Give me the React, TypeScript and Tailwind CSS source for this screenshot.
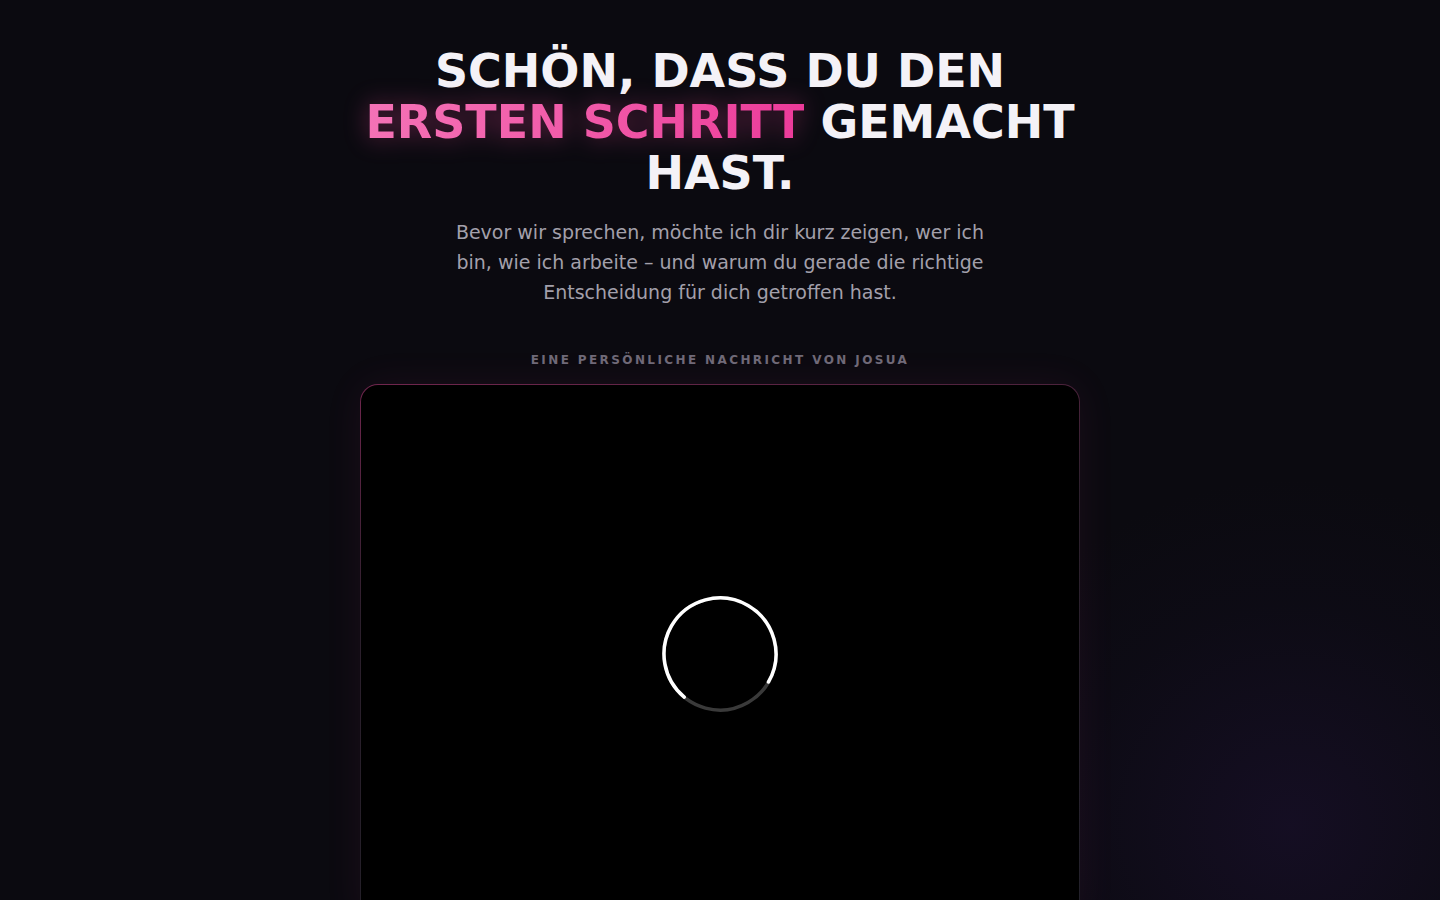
export default function App() {
  return (
    <div className="relative min-h-screen overflow-hidden bg-[#0b0a10] font-['DejaVu_Sans',sans-serif]">
      <div className="pointer-events-none absolute -right-[200px] bottom-[-250px] h-[700px] w-[700px] rounded-full bg-[radial-gradient(circle,rgba(60,30,110,0.2)_0%,rgba(30,20,60,0.1)_45%,transparent_70%)]" />
      <main className="relative mx-auto flex w-[720px] flex-col items-center pt-[46px]">
        <h1 className="text-center text-[46px] font-bold leading-[51px] text-[#f4f2f7]">
          SCHÖN, DASS DU DEN
          <br />
          <span className="bg-gradient-to-r from-[#f472b6] to-[#ec3a9a] bg-clip-text text-transparent [filter:drop-shadow(0_0_12px_rgba(236,72,153,0.4))]">
            ERSTEN SCHRITT
          </span>{' '}
          GEMACHT
          <br />
          HAST.
        </h1>
        <p className="mt-[18px] w-[540px] text-center text-[19px] leading-[30px] text-[#a3a0ab]">
          Bevor wir sprechen, möchte ich dir kurz zeigen, wer ich bin, wie ich arbeite – und warum du gerade die richtige
          Entscheidung für dich getroffen hast.
        </p>
        <p className="mt-[45px] text-[12px] font-bold leading-4 tracking-[0.2em] text-[#6f6a78]">
          EINE PERSÖNLICHE NACHRICHT VON JOSUA
        </p>
        <div className="mt-[16px] w-full rounded-[18px] bg-[linear-gradient(170deg,rgba(236,72,153,0.45)_0%,rgba(120,80,110,0.3)_35%,rgba(80,80,90,0.3)_100%)] p-px shadow-[0_0_40px_rgba(236,72,153,0.07)]">
          <div className="flex aspect-[4/3] w-full items-center justify-center rounded-[17px] bg-black">
            <svg width="120" height="120" viewBox="0 0 120 120" className="-rotate-[165deg]">
              <circle cx="60" cy="60" r="56" fill="none" stroke="#3a3a3a" strokeWidth="3.5" />
              <circle
                cx="60"
                cy="60"
                r="56"
                fill="none"
                stroke="#ffffff"
                strokeWidth="3.5"
                strokeDasharray="254 352"
                strokeLinecap="round"
                transform="rotate(195 60 60) scale(1 -1) translate(0 -120)"
              />
            </svg>
          </div>
        </div>
      </main>
    </div>
  )
}
